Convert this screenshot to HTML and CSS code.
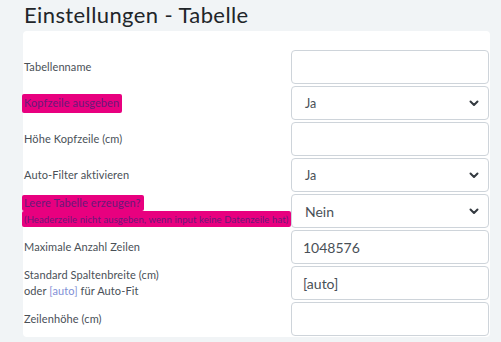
FILE: index.html
```html
<!DOCTYPE html>
<html lang="de">
<head>
    <meta charset="UTF-8">
    <meta name="viewport" content="width=device-width, initial-scale=1.0">
    <title>Einstellungen - Tabelle</title>
    <link rel="stylesheet" href="styles.css">
</head>
<body>
    <h2 class="page-title">Einstellungen - Tabelle</h2>
    <div class="settings-card">
        <div class="form-row">
            <label class="form-label">Tabellenname</label>
            <input class="form-control" type="text" value="">
        </div>
        <div class="form-row">
            <label class="form-label"><span class="marker">Kopfzeile ausgeben</span></label>
            <div class="form-select small-text">Ja
                <svg class="chevron" width="10" height="7" viewBox="0 0 10 7"><path d="M1.5 1.5 5 5l3.5-3.5" fill="none" stroke="#343a40" stroke-width="2" stroke-linecap="round" stroke-linejoin="round"/></svg>
            </div>
        </div>
        <div class="form-row">
            <label class="form-label">Höhe Kopfzeile (cm)</label>
            <input class="form-control" type="text" value="">
        </div>
        <div class="form-row">
            <label class="form-label">Auto-Filter aktivieren</label>
            <div class="form-select small-text">Ja
                <svg class="chevron" width="10" height="7" viewBox="0 0 10 7"><path d="M1.5 1.5 5 5l3.5-3.5" fill="none" stroke="#343a40" stroke-width="2" stroke-linecap="round" stroke-linejoin="round"/></svg>
            </div>
        </div>
        <div class="form-row">
            <label class="form-label marker-block">
                <span class="marker">Leere Tabelle erzeugen?</span>
                <span class="marker marker-wide"><small>(Headerzeile nicht ausgeben, wenn input keine Datenzeile hat)</small></span>
            </label>
            <div class="form-select">Nein
                <svg class="chevron" width="10" height="7" viewBox="0 0 10 7"><path d="M1.5 1.5 5 5l3.5-3.5" fill="none" stroke="#343a40" stroke-width="2" stroke-linecap="round" stroke-linejoin="round"/></svg>
            </div>
        </div>
        <div class="form-row">
            <label class="form-label">Maximale Anzahl Zeilen</label>
            <input class="form-control" type="text" value="1048576">
        </div>
        <div class="form-row">
            <label class="form-label">Standard Spaltenbreite (cm)<br>oder <span class="hint">[auto]</span> für Auto-Fit</label>
            <input class="form-control" type="text" value="[auto]">
        </div>
        <div class="form-row">
            <label class="form-label">Zeilenhöhe (cm)</label>
            <input class="form-control" type="text" value="">
        </div>
    </div>
</body>
</html>
```

FILE: styles.css
```css
body {
    font-family: 'Lato', 'Open Sans', Arial, sans-serif;
    background: #f1f4f6;
    margin: 0;
    padding: 0 11px 0 23px;
    color: #495057;
}
.page-title {
    margin: 0;
    padding: 1px 0 0 1px;
    height: 30px;
    font-size: 22px;
    font-weight: 400;
    color: #212529;
    letter-spacing: 0.4px;
}
.settings-card {
    background: #fff;
    border-radius: 4px;
    padding: 19px 1px 1px 1px;
    display: flex;
    flex-direction: column;
    gap: 2px;
}
.form-row {
    display: grid;
    grid-template-columns: 1fr 198px;
    align-items: center;
    height: 34px;
}
.form-label {
    font-size: 11px;
    line-height: 16px;
    color: #495057;
    letter-spacing: 0.1px;
    min-width: 0;
}
.marker {
    background: #e8007f;
    color: #6a1a78;
    padding: 2px 3px 4px 2px;
    margin-left: -2px;
    border-radius: 2px;
}
.marker-block {
    display: flex;
    flex-direction: column;
    align-items: flex-start;
    margin-left: -2px;
}
.marker-block .marker {
    margin-left: 0;
    padding: 0 3px 0 2px;
}
.marker-wide {
    white-space: nowrap;
    line-height: 15px;
}
.marker-wide small {
    font-size: 9.5px;
    letter-spacing: 0.1px;
}
.hint {
    color: #7f8fd6;
}
.form-control,
.form-select {
    box-sizing: border-box;
    width: 198px;
    height: 34px;
    border: 1px solid #ced4da;
    border-radius: 4px;
    font-family: inherit;
    font-size: 14px;
    color: #495057;
    padding: 0 11px;
    background: #fff;
}
.form-select {
    display: flex;
    align-items: center;
    justify-content: space-between;
    padding: 0 9px 0 13px;
}
.small-text {
    font-size: 12.5px;
}
```
